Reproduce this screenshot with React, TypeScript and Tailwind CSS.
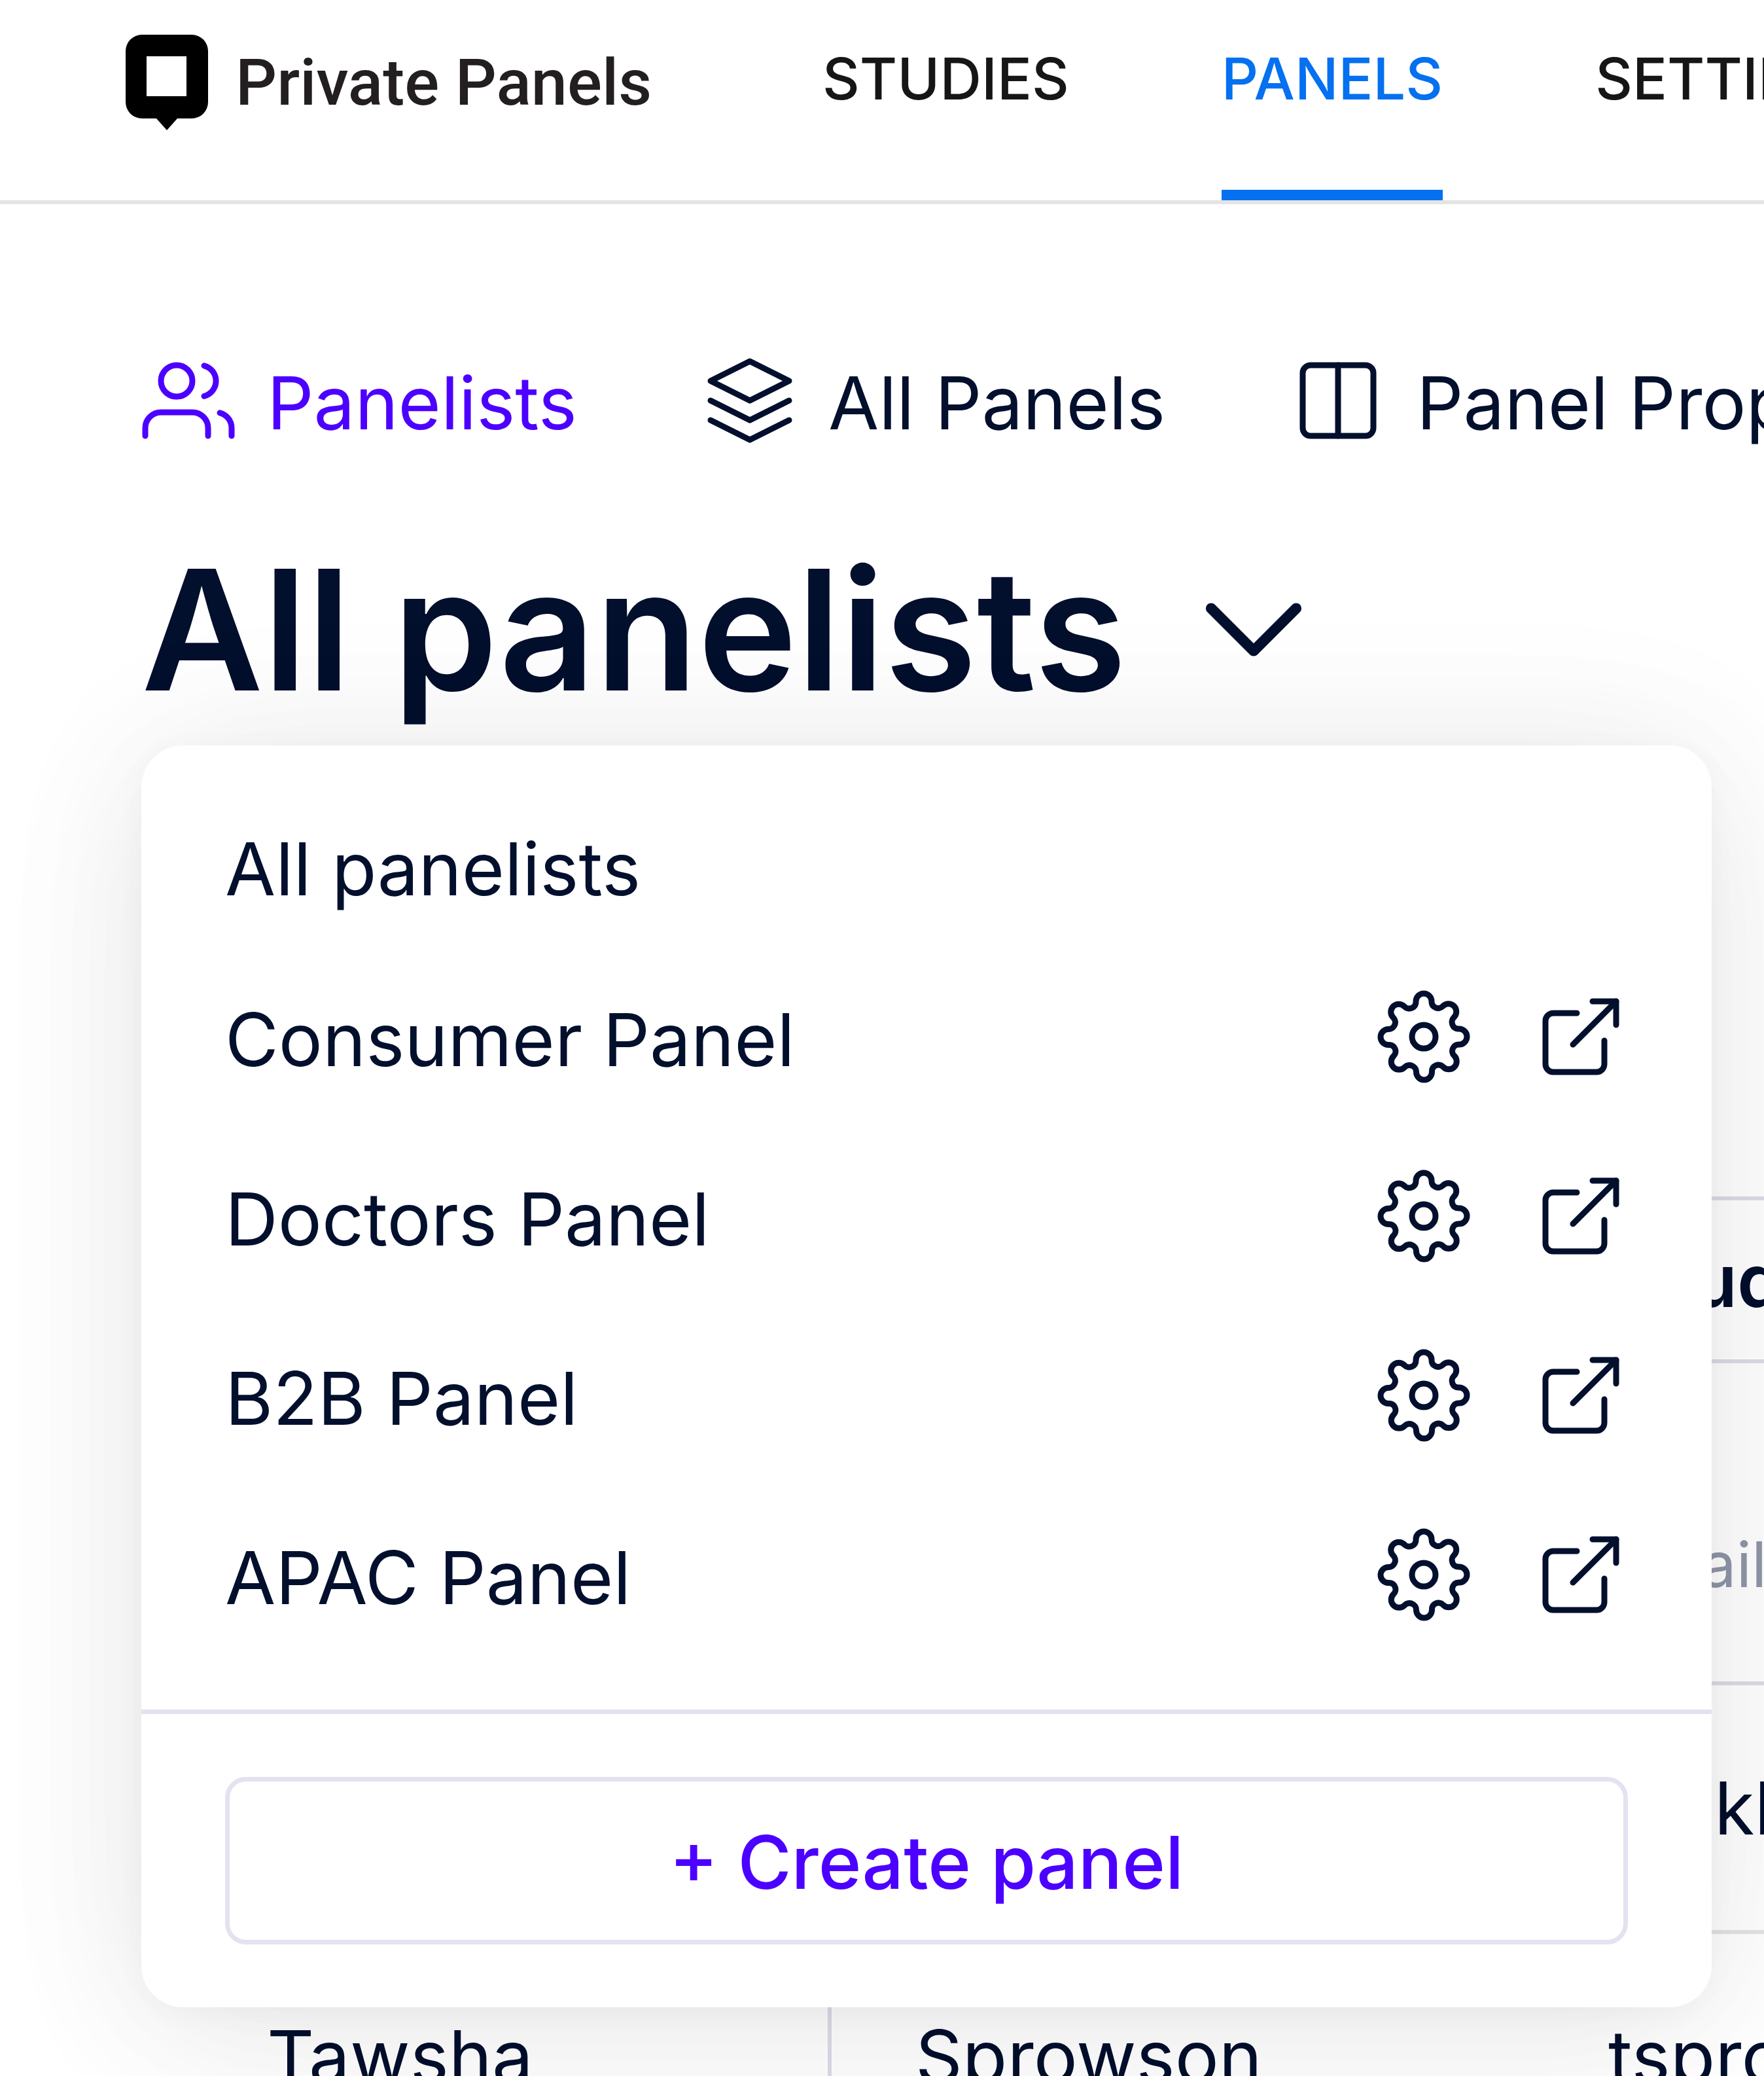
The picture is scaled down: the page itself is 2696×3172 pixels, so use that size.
import { useState, type ReactNode } from "react";

type IconProps = { className?: string };

const MENU_PANELS = ["Consumer Panel", "Doctors Panel", "B2B Panel", "APAC Panel"];

const PANELISTS = [
  { first: "Merrill", last: "Ockleford", email: "mcklein0@mail.com" },
  { first: "Tawsha", last: "Sprowson", email: "tsprowson1@mail.com" },
];

function Stroke({ className, children }: IconProps & { children: ReactNode }) {
  return (
    <svg
      viewBox="0 0 24 24"
      fill="none"
      stroke="currentColor"
      strokeWidth="1.5"
      strokeLinecap="round"
      strokeLinejoin="round"
      className={`shrink-0 ${className ?? "size-36"}`}
      aria-hidden="true"
    >
      {children}
    </svg>
  );
}

function UsersIcon() {
  return (
    <Stroke>
      <path d="M17 21v-2a4 4 0 0 0-4-4H5a4 4 0 0 0-4 4v2" />
      <circle cx="9" cy="7" r="4" />
      <path d="M23 21v-2a4 4 0 0 0-3-3.87" />
      <path d="M16 3.13a4 4 0 0 1 0 7.75" />
    </Stroke>
  );
}

function LayersIcon() {
  return (
    <Stroke>
      <path d="M12 2 2 7l10 5 10-5-10-5Z" />
      <path d="m2 17 10 5 10-5" />
      <path d="m2 12 10 5 10-5" />
    </Stroke>
  );
}

function ColumnsIcon() {
  return (
    <Stroke>
      <rect x="3" y="3" width="18" height="18" rx="2" />
      <path d="M12 3v18" />
    </Stroke>
  );
}

function GearIcon() {
  return (
    <Stroke>
      <circle cx="12" cy="12" r="3" />
      <path d="M19.4 15a1.65 1.65 0 0 0 .33 1.82l.06.06a2 2 0 0 1 0 2.83 2 2 0 0 1-2.83 0l-.06-.06a1.65 1.65 0 0 0-1.82-.33 1.65 1.65 0 0 0-1 1.51V21a2 2 0 0 1-2 2 2 2 0 0 1-2-2v-.09A1.65 1.65 0 0 0 9 19.4a1.65 1.65 0 0 0-1.82.33l-.06.06a2 2 0 0 1-2.83 0 2 2 0 0 1 0-2.83l.06-.06a1.65 1.65 0 0 0 .33-1.82 1.65 1.65 0 0 0-1.51-1H3a2 2 0 0 1-2-2 2 2 0 0 1 2-2h.09A1.65 1.65 0 0 0 4.6 9a1.65 1.65 0 0 0-.33-1.82l-.06-.06a2 2 0 0 1 0-2.83 2 2 0 0 1 2.83 0l.06.06a1.65 1.65 0 0 0 1.82.33H9a1.65 1.65 0 0 0 1-1.51V3a2 2 0 0 1 2-2 2 2 0 0 1 2 2v.09a1.65 1.65 0 0 0 1 1.51 1.65 1.65 0 0 0 1.82-.33l.06-.06a2 2 0 0 1 2.83 0 2 2 0 0 1 0 2.83l-.06.06a1.65 1.65 0 0 0-.33 1.82V9a1.65 1.65 0 0 0 1.51 1H21a2 2 0 0 1 2 2 2 2 0 0 1-2 2h-.09a1.65 1.65 0 0 0-1.51 1z" />
    </Stroke>
  );
}

function ExternalIcon() {
  return (
    <Stroke>
      <path d="M18 13v6a2 2 0 0 1-2 2H5a2 2 0 0 1-2-2V8a2 2 0 0 1 2-2h6" />
      <path d="M15 3h6v6" />
      <path d="M10 14 21 3" />
    </Stroke>
  );
}

function Logo() {
  return (
    <svg viewBox="0 0 128 148" className="h-[148px] w-[128px] shrink-0" aria-hidden="true">
      <path
        fillRule="evenodd"
        d="M25 1h76a25 25 0 0 1 25 25v78a25 25 0 0 1-25 25H79L63 147 47 129H25A25 25 0 0 1 0 104V26A25 25 0 0 1 25 1ZM32 34v61h61V34Z"
      />
    </svg>
  );
}

function NavLink({ active, children }: { active?: boolean; children: ReactNode }) {
  return (
    <a
      href="#"
      className={`border-b-[16px] pt-[60px] text-[88px] leading-[120px] font-medium whitespace-nowrap ${
        active ? "border-[#0570f0] text-[#0570f0]" : "border-transparent text-[#161616]"
      }`}
    >
      {children}
    </a>
  );
}

function Tab({ icon, active, children }: { icon: ReactNode; active?: boolean; children: ReactNode }) {
  return (
    <a
      href="#"
      className={`flex shrink-0 items-end gap-12 text-[112px] leading-[138px] whitespace-nowrap ${
        active ? "text-[#4c00ff]" : ""
      }`}
    >
      {icon}
      {children}
    </a>
  );
}

function PanelMenu() {
  return (
    <div className="absolute top-full right-20 left-0 z-10 mt-[33px] rounded-[64px] bg-white shadow-[0_8px_48px_rgba(0,0,0,0.03),0_48px_280px_rgba(0,0,0,0.06),0_0_1100px_rgba(0,0,0,0.06)]">
      <ul className="px-32 pt-[68px] pb-[69px] text-[112px] leading-[136px]">
        <li className="flex h-60 items-center">
          <button type="button">All panelists</button>
        </li>
        {MENU_PANELS.map((name) => (
          <li key={name} className="flex h-[274px] items-center gap-24">
            <button type="button" className="flex-1 pt-2 text-left">
              {name}
            </button>
            <button type="button" aria-label={`${name} settings`}>
              <GearIcon />
            </button>
            <a href="#" aria-label={`Open ${name}`}>
              <ExternalIcon />
            </a>
          </li>
        ))}
      </ul>
      <div className="border-t-[7px] border-[#e2e3ef] px-32 py-24">
        <button
          type="button"
          className="h-64 w-full rounded-[32px] border-[7px] border-[#e2e3ef] pt-1 text-[112px] font-medium text-[#4c00ff]"
        >
          + Create panel
        </button>
      </div>
    </div>
  );
}

function PanelistTable() {
  return (
    <table className="mt-[722px] w-full table-fixed border-separate border-spacing-0 text-left text-[112px] leading-[136px] whitespace-nowrap">
      <thead>
        <tr className="h-[255px]">
          <th className="w-[1055px] border-y-[6px] border-r-[6px] border-[#dddde9] pl-48 font-semibold">
            First name
          </th>
          <th className="w-[1059px] border-y-[6px] border-[#dddde9] pl-32 font-semibold">Last name</th>
          <th className="border-y-[6px] border-[#dddde9] pl-36 font-semibold">Studies</th>
        </tr>
      </thead>
      <tbody>
        <tr className="h-[492px] text-[96px]">
          <td className="border-r-[6px] border-b-[6px] border-[#dddde9] pt-32 pl-48">
            <input aria-label="First name" placeholder="First name" className="w-full placeholder:text-[#8f97a8]" />
          </td>
          <td className="border-b-[6px] border-[#dddde9] pt-32 pl-32">
            <input aria-label="Last name" placeholder="Last name" className="w-full placeholder:text-[#8f97a8]" />
          </td>
          <td className="border-b-[6px] border-[#dddde9] pt-32 pl-32">
            <input aria-label="Email" placeholder="Email" className="w-full placeholder:text-[#8f97a8]" />
          </td>
        </tr>
        {PANELISTS.map((p) => (
          <tr key={p.email} className="h-[380px]">
            <td className="border-r-[6px] border-b-[6px] border-r-[#dddde9] border-b-[#e3e3e3] pl-48">{p.first}</td>
            <td className="border-b-[6px] border-[#e3e3e3] pl-32">{p.last}</td>
            <td className="overflow-hidden border-b-[6px] border-[#e3e3e3] pl-32">{p.email}</td>
          </tr>
        ))}
      </tbody>
    </table>
  );
}

export default function App() {
  const [open, setOpen] = useState(true);

  return (
    <div className="h-screen overflow-hidden bg-white font-['Inter',sans-serif] text-[#020f2d]">
      <header className="flex h-[312px] items-stretch border-b-[6px] border-[#e4e4e4] pl-48">
        <a
          href="#"
          className="mt-[52px] flex h-[148px] w-[1065px] shrink-0 items-center gap-10 font-['Roboto',sans-serif] text-[99px] font-medium whitespace-nowrap text-[#231f20]"
        >
          <Logo />
          Private Panels
        </a>
        <nav className="flex gap-[233px]">
          <NavLink>STUDIES</NavLink>
          <NavLink active>PANELS</NavLink>
          <NavLink>SETTINGS</NavLink>
        </nav>
      </header>

      <main className="pt-[228px] pl-[216px]">
        <nav className="flex gap-48">
          <Tab icon={<UsersIcon />} active>
            Panelists
          </Tab>
          <Tab icon={<LayersIcon />}>All Panels</Tab>
          <Tab icon={<ColumnsIcon />}>Panel Properties</Tab>
        </nav>

        <div className="relative mt-[134px]">
          <h1 className="text-[256px] leading-[288px] font-semibold">
            <button
              type="button"
              aria-expanded={open}
              onClick={() => setOpen(!open)}
              className="flex items-center gap-16 whitespace-nowrap"
            >
              All panelists
              <Stroke className="size-[260px]">
                <path d="m6 9 6 6 6-6" />
              </Stroke>
            </button>
          </h1>
          {open && <PanelMenu />}
        </div>

        <PanelistTable />
      </main>
    </div>
  );
}
